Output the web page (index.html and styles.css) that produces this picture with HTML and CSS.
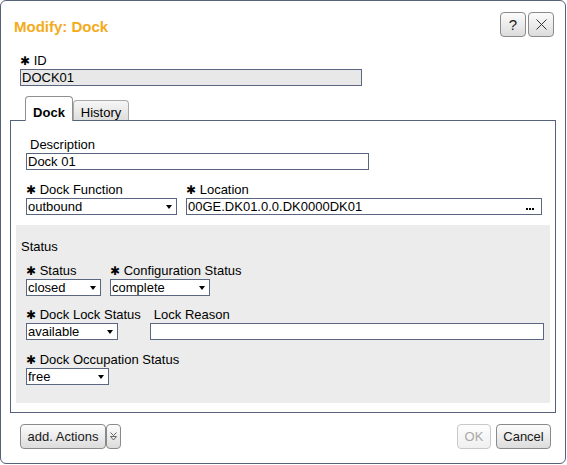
FILE: index.html
```html
<!DOCTYPE html>
<html>
<head>
<meta charset="utf-8">
<link rel="stylesheet" href="styles.css">
</head>
<body>
<div class="dialog">
  <div class="header">
    <h1 class="title">Modify: Dock</h1>
    <div class="hbtns">
      <button class="btn hbtn">?</button>
      <button class="btn hbtn"><svg width="11" height="11" viewBox="0 0 11 11"><path d="M0.5 0.5 L10.5 10.5 M10.5 0.5 L0.5 10.5" stroke="#333" stroke-width="1" fill="none"/></svg></button>
    </div>
  </div>

  <div class="idfield">
    <label class="lbl"><span class="req">✱</span> ID</label>
    <input class="text ro w-id" value="DOCK01" readonly>
  </div>

  <div class="tabs">
    <div class="tab active">Dock</div>
    <div class="tab">History</div>
  </div>

  <div class="panel">
    <div class="field desc">
      <label class="lbl pad">Description</label>
      <input class="text w-desc" value="Dock 01">
    </div>

    <div class="row row-func">
      <div class="field">
        <label class="lbl"><span class="req">✱</span> Dock Function</label>
        <div class="sel w-func"><select><option>outbound</option></select></div>
      </div>
      <div class="field">
        <label class="lbl"><span class="req">✱</span> Location</label>
        <div class="loc w-loc"><input class="bare" value="00GE.DK01.0.0.DK0000DK01"><svg class="dots" width="8" height="2" viewBox="0 0 8 2"><rect x="0" y="0" width="2" height="2" fill="#000"/><rect x="3" y="0" width="2" height="2" fill="#000"/><rect x="6" y="0" width="2" height="2" fill="#000"/></svg></div>
      </div>
    </div>

    <div class="statusbox">
      <div class="heading">Status</div>
      <div class="row srow1">
        <div class="field">
          <label class="lbl"><span class="req">✱</span> Status</label>
          <div class="sel w-status"><select><option>closed</option></select></div>
        </div>
        <div class="field">
          <label class="lbl"><span class="req">✱</span> Configuration Status</label>
          <div class="sel w-conf"><select><option>complete</option></select></div>
        </div>
      </div>
      <div class="row srow2">
        <div class="field">
          <label class="lbl"><span class="req">✱</span> Dock Lock Status</label>
          <div class="sel w-lock"><select><option>available</option></select></div>
        </div>
        <div class="field">
          <label class="lbl pad">Lock Reason</label>
          <input class="text w-reason" value="">
        </div>
      </div>
      <div class="row srow3">
        <div class="field">
          <label class="lbl"><span class="req">✱</span> Dock Occupation Status</label>
          <div class="sel w-occ"><select><option>free</option></select></div>
        </div>
      </div>
    </div>
  </div>

  <div class="footer">
    <div class="fgroup">
      <button class="btn fbtn w-add">add. Actions</button>
      <button class="btn fbtn w-more"><svg width="7" height="9" viewBox="0 0 7 9"><path d="M0.5 0.5 L3.5 3.5 L6.5 0.5" stroke="#666" fill="none"/><path d="M0.5 4.5 L6.5 4.5 L3.5 8 Z" stroke="#666" fill="none"/></svg></button>
    </div>
    <div class="fgroup gap">
      <button class="btn fbtn w-ok" disabled>OK</button>
      <button class="btn fbtn w-cancel">Cancel</button>
    </div>
  </div>
</div>
</body>
</html>
```
FILE: styles.css
```css
* { box-sizing: border-box; }
html, body { margin: 0; padding: 0; background: #fff; }
body { font-family: "Liberation Sans", Arial, sans-serif; font-size: 13px; color: #000; }

.dialog {
  width: 566px;
  height: 464px;
  border: 1px solid #56617a;
  border-radius: 6px;
  background: #fff;
}

.header {
  display: flex;
  justify-content: space-between;
  align-items: flex-start;
  padding: 11px 11px 0 13px;
  height: 36px;
}
.title {
  margin: 6px 0 0 0;
  font-size: 15px;
  line-height: 17px;
  font-weight: bold;
  color: #f3ab1c;
}
.hbtns { display: flex; gap: 2px; }

.btn {
  font-family: "Liberation Sans", Arial, sans-serif;
  font-size: 13px;
  color: #1a1a1a;
  border: 1px solid #8a8a8a;
  border-radius: 4px;
  background: linear-gradient(#fcfcfc, #dcdcdc);
  padding: 0;
  margin: 0;
  display: flex;
  align-items: center;
  justify-content: center;
}
.hbtn { width: 26px; height: 25px; font-size: 15px; }

.lbl {
  display: block;
  height: 16px;
  line-height: 16px;
  white-space: nowrap;
}
.lbl.pad { padding-left: 4px; }
.req {
  font-family: "DejaVu Sans", sans-serif;
  font-size: 12px;
  line-height: 0;
}

.text {
  display: block;
  height: 17px;
  border: 1px solid #5b6780;
  padding: 0 1px;
  margin: 0;
  font-family: "Liberation Sans", Arial, sans-serif;
  font-size: 13px;
  color: #000;
  background: #fff;
  outline: none;
}
.text.ro { background: #e8e8e8; }

.idfield { margin: 16px 0 0 19px; }
.w-id { width: 342px; }

.tabs {
  display: flex;
  align-items: flex-end;
  margin: 10px 0 0 24px;
  height: 24px;
}
.tab {
  border: 1px solid #a9a9a9;
  border-bottom: none;
  border-radius: 4px 4px 0 0;
  text-align: center;
  line-height: 16px;
  background: linear-gradient(#f6f6f6, #dedede);
  width: 56px;
  height: 20px;
  padding-top: 4px;
}
.tab.active {
  position: relative;
  z-index: 1;
  width: 48px;
  height: 25px;
  margin-bottom: -1px;
  padding-top: 8px;
  font-weight: bold;
  background: #fff;
  border-color: #8f8f8f;
}

.panel {
  margin: 0 9px;
  border: 1px solid #56617a;
  padding: 16px 5px 9px 5px;
}

.field { display: flex; flex-direction: column; }
.desc { margin-left: 10px; }
.w-desc { width: 343px; }

.row { display: flex; gap: 9px; padding-left: 10px; }
.row-func { margin-top: 12px; margin-bottom: 10px; }

.sel { position: relative; height: 17px; }
.sel select {
  -webkit-appearance: none;
  appearance: none;
  display: block;
  width: 100%;
  height: 17px;
  border: 1px solid #5b6780;
  border-radius: 0;
  padding: 0 1px;
  margin: 0;
  font-family: "Liberation Sans", Arial, sans-serif;
  font-size: 13px;
  line-height: 15px;
  color: #000;
  background: #fff;
  outline: none;
}
.sel::after {
  content: "";
  position: absolute;
  right: 5px;
  top: 7px;
  border-left: 3px solid transparent;
  border-right: 3px solid transparent;
  border-top: 4px solid #000;
}
.w-func { width: 151px; }
.w-status { width: 75px; }
.w-conf { width: 100px; }
.w-lock { width: 92px; }
.w-occ { width: 83px; }

.loc {
  display: flex;
  align-items: flex-end;
  height: 17px;
  border: 1px solid #5b6780;
  background: #fff;
}
.w-loc { width: 356px; }
.loc .bare {
  flex: 1;
  min-width: 0;
  height: 15px;
  border: none;
  padding: 0 1px;
  margin: 0;
  font-family: "Liberation Sans", Arial, sans-serif;
  font-size: 13px;
  color: #000;
  background: transparent;
  outline: none;
  align-self: center;
}
.dots { margin: 0 7px 4px 4px; flex: none; }

.statusbox {
  background: #ececec;
  padding: 14px 5px 18px 5px;
}
.heading { line-height: 16px; }
.statusbox .row { padding-left: 5px; }
.srow1 { margin-top: 8px; gap: 9px; }
.srow2 { margin-top: 11px; gap: 9px; }
.srow3 { margin-top: 12px; }
.w-reason { width: 394px; }

.footer {
  display: flex;
  justify-content: space-between;
  margin-top: 11px;
  padding: 0 14px 0 19px;
}
.fgroup { display: flex; }
.fgroup.gap { gap: 5px; }
.fbtn { height: 25px; }
.w-add { width: 86px; }
.w-more { width: 15px; }
.w-ok { width: 34px; }
.w-cancel { width: 55px; }
.btn:disabled {
  color: #a8a8a8;
  border-color: #c8c8c8;
  background: linear-gradient(#fdfdfd, #f0f0f0);
}
```
